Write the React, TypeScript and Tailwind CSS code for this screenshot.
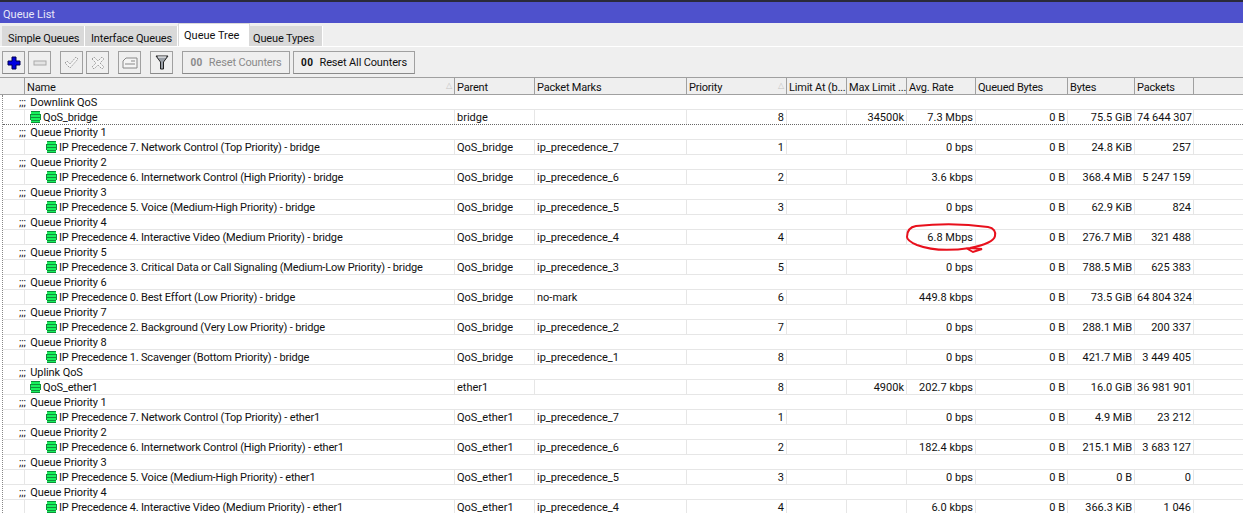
import React from "react";

const W = ["w-[22px]", "w-[430px]", "w-[80px]", "w-[152px]", "w-[100px]", "w-[60px]", "w-[60px]", "w-[69px]", "w-[92px]", "w-[67px]", "w-[59px]"];

type R = { c?: string; n?: string; lvl?: number; sel?: boolean; v?: string[] };

const q = (n: string, lvl: number, v: string[], sel = false): R => ({ n, lvl, v, sel });
const c = (t: string): R => ({ c: t });

const rows: R[] = [
  c("Downlink QoS"),
  q("QoS_bridge", 0, ["bridge", "", "8", "", "34500k", "7.3 Mbps", "0 B", "75.5 GiB", "74 644 307"], true),
  c("Queue Priority 1"),
  q("IP Precedence 7. Network Control (Top Priority) - bridge", 1, ["QoS_bridge", "ip_precedence_7", "1", "", "", "0 bps", "0 B", "24.8 KiB", "257"]),
  c("Queue Priority 2"),
  q("IP Precedence 6. Internetwork Control (High Priority) - bridge", 1, ["QoS_bridge", "ip_precedence_6", "2", "", "", "3.6 kbps", "0 B", "368.4 MiB", "5 247 159"]),
  c("Queue Priority 3"),
  q("IP Precedence 5. Voice (Medium-High Priority) - bridge", 1, ["QoS_bridge", "ip_precedence_5", "3", "", "", "0 bps", "0 B", "62.9 KiB", "824"]),
  c("Queue Priority 4"),
  q("IP Precedence 4. Interactive Video (Medium Priority) - bridge", 1, ["QoS_bridge", "ip_precedence_4", "4", "", "", "6.8 Mbps", "0 B", "276.7 MiB", "321 488"]),
  c("Queue Priority 5"),
  q("IP Precedence 3. Critical Data or Call Signaling (Medium-Low Priority) - bridge", 1, ["QoS_bridge", "ip_precedence_3", "5", "", "", "0 bps", "0 B", "788.5 MiB", "625 383"]),
  c("Queue Priority 6"),
  q("IP Precedence 0. Best Effort (Low Priority) - bridge", 1, ["QoS_bridge", "no-mark", "6", "", "", "449.8 kbps", "0 B", "73.5 GiB", "64 804 324"]),
  c("Queue Priority 7"),
  q("IP Precedence 2. Background (Very Low Priority) - bridge", 1, ["QoS_bridge", "ip_precedence_2", "7", "", "", "0 bps", "0 B", "288.1 MiB", "200 337"]),
  c("Queue Priority 8"),
  q("IP Precedence 1. Scavenger (Bottom Priority) - bridge", 1, ["QoS_bridge", "ip_precedence_1", "8", "", "", "0 bps", "0 B", "421.7 MiB", "3 449 405"]),
  c("Uplink QoS"),
  q("QoS_ether1", 0, ["ether1", "", "8", "", "4900k", "202.7 kbps", "0 B", "16.0 GiB", "36 981 901"]),
  c("Queue Priority 1"),
  q("IP Precedence 7. Network Control (Top Priority) - ether1", 1, ["QoS_ether1", "ip_precedence_7", "1", "", "", "0 bps", "0 B", "4.9 MiB", "23 212"]),
  c("Queue Priority 2"),
  q("IP Precedence 6. Internetwork Control (High Priority) - ether1", 1, ["QoS_ether1", "ip_precedence_6", "2", "", "", "182.4 kbps", "0 B", "215.1 MiB", "3 683 127"]),
  c("Queue Priority 3"),
  q("IP Precedence 5. Voice (Medium-High Priority) - ether1", 1, ["QoS_ether1", "ip_precedence_5", "3", "", "", "0 bps", "0 B", "0 B", "0"]),
  c("Queue Priority 4"),
  q("IP Precedence 4. Interactive Video (Medium Priority) - ether1", 1, ["QoS_ether1", "ip_precedence_4", "4", "", "", "6.0 kbps", "0 B", "366.3 KiB", "1 046"]),
];

const Stack = () => (
  <svg width="11" height="12" viewBox="0 0 11 12" className="shrink-0">
    <rect x="1" y="0" width="9" height="12" rx="1.500" fill="#16f25c" />
    <rect x="0" y="3" width="11" height="6" fill="#16f25c" />
    <path d="M1 0.500h9M0 3.500h11M0 6.500h11M1 9.500h9M1 11.500h9" stroke="#0f8f3a" />
    <path d="M0.500 3v6M10.500 3v6" stroke="#0f8f3a" />
  </svg>
);

const Tab = ({ t, w, active, pad }: { t: string; w: string; active?: boolean; pad: string }) => (
  <div className={active ? `${w} ${pad} h-[23px] whitespace-nowrap bg-white border border-b-0 border-[#d9d9d9] flex items-center pt-[1px]` : `${w} ${pad} h-[20px] whitespace-nowrap bg-[#d9d9d9] border-r border-white flex items-center pt-[4px] tracking-[-0.15px]`}>
    {t}
  </div>
);

const Btn = ({ w, children, cls = "" }: { w: string; children?: React.ReactNode; cls?: string }) => (
  <div className={`${w} h-[23px] shrink-0 border border-[#a0a0a0] border-b-[#8a8a8a] bg-[#efefef] flex items-center justify-center whitespace-nowrap tracking-[-0.15px] ${cls}`}>{children}</div>
);

export default function App() {
  return (
    <div className="relative w-[1243px] h-[513px] overflow-hidden bg-white text-[#111] text-[11px] leading-[15px] font-['Roboto',sans-serif]">
      <div className="h-[23px] bg-[#4e51cc] border-t-2 border-[#2a2a3a] text-[#e8e8f8] pl-[3px] text-[11px] leading-[25px]">Queue List</div>
      <div className="h-[24px] bg-[#efefef] border-b border-white flex items-end pl-[2px]">
        <Tab t="Simple Queues" w="w-[83px]" pad="pl-[6px]" />
        <Tab t="Interface Queues" w="w-[93px]" pad="pl-[6px]" />
        <Tab t="Queue Tree" w="w-[72px]" pad="pl-[5px]" active />
        <Tab t="Queue Types" w="w-[73px]" pad="pl-[3px]" />
      </div>
      <div className="h-[30px] bg-[#efefef] flex items-center pl-[2px] pt-[1px]">
        <Btn w="w-[23px]">
          <svg width="14" height="14" viewBox="0 0 14 14"><path d="M5 1h4v4h4v4H9v4H5V9H1V5h4z" fill="#0000e0" stroke="#000050" /></svg>
        </Btn>
        <Btn w="w-[23px]" cls="ml-[3px]">
          <svg width="14" height="6" viewBox="0 0 14 6"><rect x="1" y="1" width="12" height="4" fill="#e4e4e4" stroke="#aaa" /></svg>
        </Btn>
        <Btn w="w-[23px]" cls="ml-[9px]">
          <svg width="15" height="13" viewBox="0 0 15 13"><path d="M1 7l2-2 3 3 6-7 2 2-8 9z" fill="#f4f4f4" stroke="#999" strokeDasharray="1.500 1" /></svg>
        </Btn>
        <Btn w="w-[23px]" cls="ml-[3px]">
          <svg width="14" height="14" viewBox="0 0 14 14"><path d="M1 3l2-2 4 4 4-4 2 2-4 4 4 4-2 2-4-4-4 4-2-2 4-4z" fill="#f4f4f4" stroke="#999" strokeDasharray="1.500 1" /></svg>
        </Btn>
        <Btn w="w-[23px]" cls="ml-[9px]">
          <svg width="16" height="12" viewBox="0 0 16 12"><path d="M1 11V4l3-3h11v10z" fill="#f4f4f4" stroke="#888" /><path d="M9 4h4M3 7h10" stroke="#888" /></svg>
        </Btn>
        <Btn w="w-[23px]" cls="ml-[9px]">
          <svg width="14" height="15" viewBox="0 0 14 15"><path d="M1 1h12L8.500 7v7h-3V7z" fill="#9aa0a8" stroke="#222" /><path d="M3 2h8" stroke="#fff" /></svg>
        </Btn>
        <Btn w="w-[108px]" cls="ml-[9px] text-[#8a8a8a]">
          <span className="font-bold text-[10px] tracking-[0.5px] mr-[6px]">00</span>Reset Counters
        </Btn>
        <Btn w="w-[122px]" cls="ml-[3px]">
          <span className="font-bold text-[10px] tracking-[0.5px] mr-[6px]">00</span>Reset All Counters
        </Btn>
      </div>
      <div className="flex h-[18px] bg-[#efefef] border-y border-[#a0a0a0] pl-[3px]">
        {["", "Name", "Parent", "Packet Marks", "Priority", "Limit At (b...", "Max Limit ...", "Avg. Rate", "Queued Bytes", "Bytes", "Packets"].map((h, i) => (
          <div key={i} className={`${W[i]} shrink-0 border-r border-[#a0a0a0] pl-[2px] pt-[2px] leading-[15px] whitespace-nowrap overflow-hidden relative tracking-[-0.2px]`}>
            {h}
            {(i === 1 || i === 4) && <span className="absolute right-[2px] top-0 text-[8px] text-[#c4c4c4]">△</span>}
          </div>
        ))}
      </div>
      <div className="border-l border-dotted border-[#888] ml-[2px]">
        {rows.map((r, i) =>
          r.c ? (
            <div key={i} className="h-[15px] pl-[16px] whitespace-nowrap overflow-hidden border-b border-[#e6e6e6] tracking-[-0.1px]">
              <span className="mr-[2px]">;;;</span> {r.c}
            </div>
          ) : (
            <div key={i} className={`flex h-[15px] border-b ${r.sel ? "border-dotted border-[#666]" : "border-[#e6e6e6]"}`}>
              <div className={`${W[0]} shrink-0 border-r border-[#e6e6e6]`} />
              <div className={`${W[1]} shrink-0 border-r border-[#e6e6e6] flex items-center gap-[2px] whitespace-nowrap overflow-hidden tracking-[-0.17px] ${r.lvl ? "pl-[21px]" : "pl-[5px]"}`}>
                <Stack />
                {r.n}
              </div>
              {r.v!.map((v, j) => (
                <div key={j} className={`${W[j + 2]} shrink-0 border-r border-[#e6e6e6] px-[2px] whitespace-nowrap overflow-hidden ${j < 2 ? "text-left" : "text-right"}`}>
                  {v}
                </div>
              ))}
            </div>
          )
        )}
      </div>
      <svg width="100" height="40" viewBox="0 0 100 40" className="absolute left-[900px] top-[218px]" fill="none">
        <path d="M7 19C7 12 10 9 16 8C35 6 60 5 88 9C94 10 96 14 95 18C94 23 85 27 70 30C50 33 30 32 17 27C10 24 7 22 7 19ZM66 30L73 34L82 31L70 30" stroke="#e8101c" strokeWidth="2" />
      </svg>
    </div>
  );
}
